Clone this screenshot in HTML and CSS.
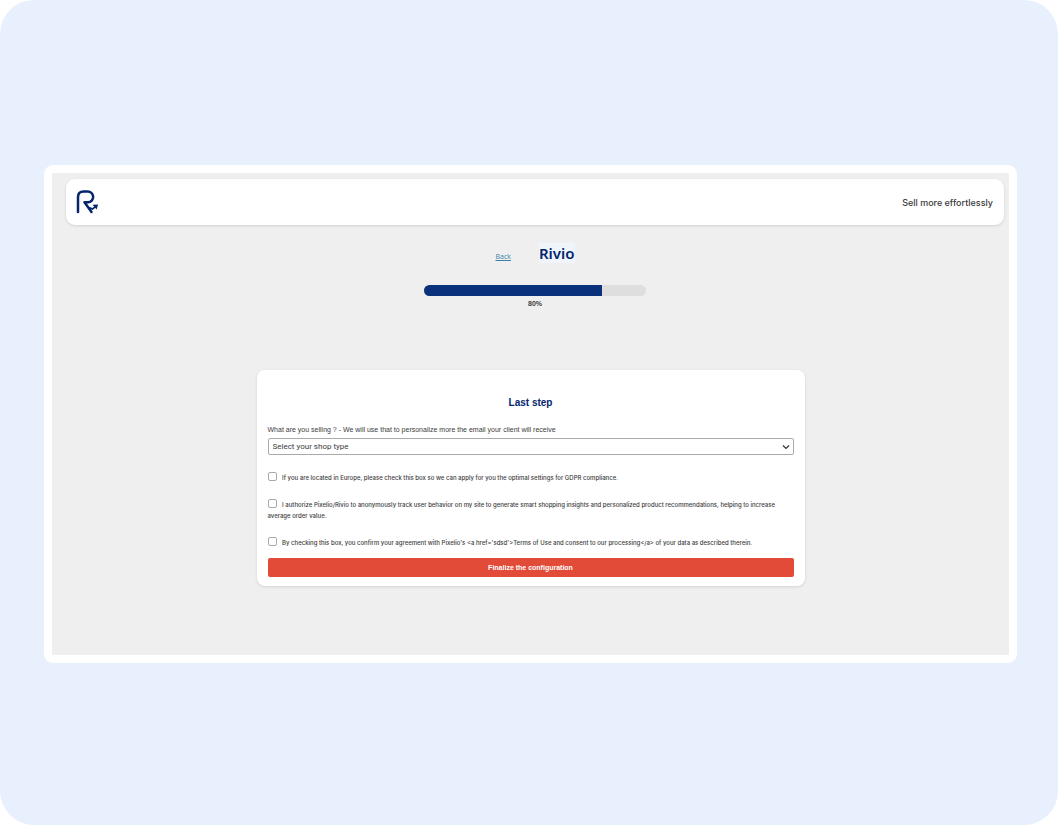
FILE: index.html
```html
<!DOCTYPE html>
<html lang="en">
<head>
    <meta charset="UTF-8">
    <meta name="viewport" content="width=device-width, initial-scale=1.0">
    <title>Rivio - Last step</title>
    <link rel="stylesheet" href="styles.css">
</head>
<body>
    <div class="page">
        <div class="frame">
            <div class="top">
                <header class="header">
                    <svg class="logo" viewBox="0 0 24 24" role="img" aria-label="Rivio">
                        <path d="M2 22V7Q2 1.500 7.500 1.500H11.500A5.400 5.400 0 0 1 12 12.300H8.500L15.500 22" fill="none" stroke="#04256c" stroke-width="2.500" stroke-linecap="round" stroke-linejoin="round"/>
                        <path d="M13 17.500L16.500 19L19.500 16.700" fill="none" stroke="#04256c" stroke-width="1.600"/>
                        <path d="M16.500 14.800L22 14.500L20.700 19.600Z" fill="#04256c"/>
                    </svg>
                    <span class="slogan">Sell more effortlessly</span>
                </header>

                <div class="title-row">
                    <a class="back" href="#">Back</a>
                    <h1>Rivio</h1>
                </div>

                <div class="progress">
                    <div class="progress-bar" style="width: 80%"></div>
                </div>
                <p class="progress-text">80%</p>
            </div>

            <form class="card">
                <h2>Last step</h2>

                <label class="select-label" for="shop_type">What are you selling ? - We will use that to personalize more the email your client will receive</label>
                <div class="select-box">
                    <select id="shop_type">
                        <option>Select your shop type</option>
                    </select>
                    <svg class="chevron" viewBox="0 0 8 6" aria-hidden="true">
                        <path d="M1 1.500L4 4.500L7 1.500" fill="none" stroke="#333" stroke-width="1.200"/>
                    </svg>
                </div>

                <div class="check-row">
                    <input type="checkbox" id="gdpr">
                    <label for="gdpr">If you are located in Europe, please check this box so we can apply for you the optimal settings for GDPR compliance.</label>
                </div>
                <div class="check-row">
                    <input type="checkbox" id="tracking">
                    <label for="tracking">I authorize Pixelio/Rivio to anonymously track user behavior on my site to generate smart shopping insights and personalized product recommendations, helping to increase average order value.</label>
                </div>
                <div class="check-row">
                    <input type="checkbox" id="terms">
                    <label for="terms">By checking this box, you confirm your agreement with Pixelio's &lt;a href='sdsd'&gt;Terms of Use and consent to our processing&lt;/a&gt; of your data as described therein.</label>
                </div>

                <button type="submit">Finalize the configuration</button>
            </form>
        </div>
    </div>
</body>
</html>
```
FILE: styles.css
```css
* {
    box-sizing: border-box;
}
body {
    margin: 0;
    background: #fff;
    font-family: "Liberation Sans", Arial, sans-serif;
    color: #3c3c3c;
}
.page {
    min-height: 100vh;
    padding: 3px 41px 0 44px;
    display: flex;
    align-items: center;
    background: #e8f0fe;
    border-radius: 34px;
}
.frame {
    flex: 1;
    padding-bottom: 69px;
    background: #efefef;
    border: 8px solid #fff;
    border-radius: 9px;
}
.top {
    padding: 6px 5px 0 14px;
}
.header {
    height: 46px;
    padding: 0 11px 0 10px;
    display: flex;
    align-items: center;
    justify-content: space-between;
    background: #fff;
    border-radius: 9px;
    box-shadow: 0 1px 3px rgba(0, 0, 0, 0.12);
}
.logo {
    width: 24px;
    height: 24px;
}
.slogan {
    font-family: Inter, sans-serif;
    font-size: 9px;
    font-weight: 500;
}
.title-row {
    margin-top: 18px;
    display: flex;
    align-items: baseline;
    justify-content: center;
    gap: 28px;
}
.back {
    font-family: "Open Sans", sans-serif;
    font-size: 7px;
    color: #3b82a8;
}
h1 {
    margin: 0;
    font-family: "Noto Sans", sans-serif;
    font-size: 15px;
    line-height: 20px;
    font-weight: 600;
    color: #04256c;
    background: #f0f5fc;
}
.progress {
    width: 222px;
    height: 11px;
    margin: 22px auto 0;
    overflow: hidden;
    background: #dedede;
    border-radius: 6px;
}
.progress-bar {
    height: 100%;
    background: #0a317c;
}
.progress-text {
    margin: 3px 0 0;
    font-size: 7px;
    line-height: 10px;
    text-align: center;
    font-weight: bold;
}
.card {
    max-width: 548px;
    margin: 61px auto 0;
    padding: 25px 11px 9px;
    background: #fff;
    border-radius: 8px;
    box-shadow: 0 1px 3px rgba(0, 0, 0, 0.12);
}
h2 {
    margin: 0 0 14px;
    font-size: 10px;
    line-height: 16px;
    text-align: center;
    color: #04256c;
}
.select-label {
    display: block;
    font-size: 7px;
    line-height: 10px;
}
.select-box {
    position: relative;
    margin: 3px 0 17px;
}
select {
    display: block;
    width: 100%;
    height: 17px;
    padding: 0 4px;
    appearance: none;
    background: #fff;
    border: 1px solid #aaa;
    border-radius: 2px;
    font-family: Roboto, sans-serif;
    font-size: 8px;
    color: #3c3c3c;
}
.chevron {
    position: absolute;
    top: 6px;
    right: 4px;
    width: 8px;
    height: 6px;
    pointer-events: none;
}
.check-row {
    margin-bottom: 16px;
    font-family: Inter, sans-serif;
    font-size: 6px;
    font-weight: 500;
    line-height: 11px;
}
.check-row:last-of-type {
    margin-bottom: 10px;
}
.check-row input {
    width: 9px;
    height: 9px;
    margin: 0 4px 0 0;
    appearance: none;
    vertical-align: top;
    background: #fff;
    border: 1px solid #aaa;
    border-radius: 2px;
}
.check-row input:checked {
    background: #0a317c;
}
button {
    display: block;
    width: 100%;
    height: 19px;
    padding: 0;
    background: #e14b37;
    border: none;
    border-radius: 2px;
    font-family: inherit;
    font-size: 7px;
    font-weight: bold;
    color: #fff;
    cursor: pointer;
}
```
